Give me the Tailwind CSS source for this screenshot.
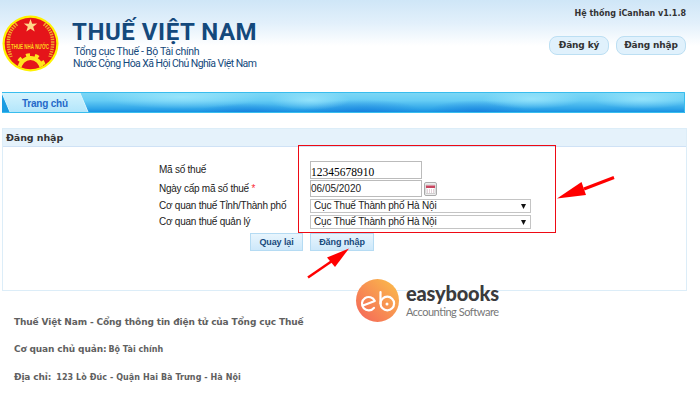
<!DOCTYPE html>
<html lang="vi">
<head>
<meta charset="utf-8">
<title>Thuế Việt Nam</title>
<script src="https://cdn.jsdelivr.net/npm/@tailwindcss/browser@4"></script>
</head>
<body class="relative h-[402px] w-[700px] overflow-hidden bg-white font-['Liberation_Sans',sans-serif] text-[10px] leading-none text-[#222]">
<header class="flex h-[92px] justify-between bg-linear-to-b from-[#cfe6f7] from-0% via-[#e2f0fb] via-25% to-white to-50% pl-[2px] pr-[14px]">
  <div class="flex">
    <svg class="mt-[15px] size-[57px] overflow-visible" viewBox="0 0 57 57">
      <defs><clipPath id="seal"><circle cx="28.500" cy="28.500" r="25.800"/></clipPath></defs>
      <circle cx="28.500" cy="28.500" r="28" fill="#fff200"/>
      <circle cx="28.500" cy="28.500" r="25.800" fill="#e5141a"/>
      <g fill="none" stroke="#f3a52a" stroke-width="3.500" stroke-dasharray="1.500 1">
        <path d="M15 9C6 16 4 27 9 42M42 9C51 16 53 27 48 42"/>
      </g>
      <path d="M28.500 4l1.700 4.800 5-.2-4 3.100 1.500 4.900-4.200-2.900-4.200 2.900 1.500-4.900-4-3.100 5 .2z" fill="#ffd98a"/>
      <g clip-path="url(#seal)" fill="none" stroke="#ffe51e">
        <circle cx="28.500" cy="54" r="11" stroke-width="4"/>
        <circle cx="28.500" cy="54" r="14" stroke-width="3.500" stroke-dasharray="4 5" stroke-dashoffset="2"/>
      </g>
      <text x="9" y="34" font-family="Liberation Sans" font-size="7.500" font-weight="bold" fill="#ffd21a" textLength="38" lengthAdjust="spacingAndGlyphs">THUẾ NHÀ NƯỚC</text>
    </svg>
    <div class="ml-[13px] whitespace-nowrap font-['Roboto',sans-serif] text-[#14497c]">
      <h1 class="mt-[19px] text-[24px] font-bold leading-[26px] tracking-[0.55px]">THUẾ VIỆT NAM</h1>
      <p class="ml-[2px] mt-px text-[10.5px] leading-[12px] tracking-[-0.3px]">Tổng cục Thuế - Bộ Tài chính</p>
      <p class="ml-[1px] text-[10.5px] leading-[12px] tracking-[-0.55px]">Nước Cộng Hòa Xã Hội Chủ Nghĩa Việt Nam</p>
    </div>
  </div>
  <div class="flex flex-col items-end font-['DejaVu_Sans',sans-serif] font-bold text-[#333]">
    <p class="mt-[8px] whitespace-nowrap text-[8px] leading-[12px]">Hệ thống iCanhan v1.1.8</p>
    <div class="mt-[16px] flex gap-[7px] text-[9px] tracking-[-0.15px]">
      <a class="flex h-[19px] w-[60px] items-center justify-center whitespace-nowrap rounded-[8px] border border-[#bcdff3] bg-[#e0f1fc]">Đăng ký</a>
      <a class="flex h-[19px] w-[70px] items-center justify-center whitespace-nowrap rounded-[8px] border border-[#bcdff3] bg-[#e0f1fc]">Đăng nhập</a>
    </div>
  </div>
</header>
<nav class="ml-[2px] h-[21px] w-[683px]">
  <svg class="block" width="683" height="21" viewBox="0 0 683 21">
    <defs>
      <linearGradient id="bar" x2="0" y2="1"><stop stop-color="#7fd8f5"/><stop offset=".4" stop-color="#66cdf5"/><stop offset=".8" stop-color="#2fa5e8"/><stop offset="1" stop-color="#108ae0"/></linearGradient>
      <linearGradient id="tab" x2="0" y2="1"><stop stop-color="#d4f3fd"/><stop offset="1" stop-color="#b3e6fb"/></linearGradient>
      <radialGradient id="dark"><stop stop-color="#1478dc" stop-opacity=".6"/><stop offset="1" stop-color="#1478dc" stop-opacity="0"/></radialGradient>
      <radialGradient id="light"><stop stop-color="#b0f0ff" stop-opacity=".6"/><stop offset="1" stop-color="#b0f0ff" stop-opacity="0"/></radialGradient>
    </defs>
    <rect width="683" height="21" fill="url(#bar)"/>
    <ellipse cx="245" cy="21" rx="50" ry="10" fill="url(#dark)"/>
    <ellipse cx="360" cy="20" rx="60" ry="13" fill="url(#dark)"/>
    <ellipse cx="475" cy="20" rx="50" ry="12" fill="url(#dark)"/>
    <ellipse cx="180" cy="5" rx="80" ry="12" fill="url(#light)"/>
    <ellipse cx="308" cy="8" rx="40" ry="10" fill="url(#light)"/>
    <ellipse cx="530" cy="7" rx="50" ry="10" fill="url(#light)"/>
    <ellipse cx="640" cy="7" rx="50" ry="10" fill="url(#light)"/>
    <path d="M0 .5H682.500V20.500H0" fill="none" stroke="#38bdee"/>
    <path d="M0 1H78L86 20H8z" fill="url(#tab)"/>
    <path d="M0 1V20H8z" fill="#1b9ce2"/>
    <path d="M0 1L8 20M78 1L86 20" stroke="#d9f6ff"/>
    <text x="20" y="15" font-family="Liberation Sans" font-size="10" font-weight="bold" fill="#2569c9" textLength="46">Trang chủ</text>
  </svg>
</nav>
<main class="ml-[2px] mt-[15px] h-[163px] w-[685px] border border-[#dcedf8]">
  <h2 class="h-[18px] border-b border-[#cfe2f6] bg-[#e5f2fb] pl-[3px] font-['DejaVu_Sans',sans-serif] text-[9.5px] font-bold leading-[17px] tracking-[-0.1px] text-[#333]">Đăng nhập</h2>
  <form class="ml-[156px] mt-[13px] grid grid-cols-[151px_auto] items-center tracking-[-0.24px] [grid-template-rows:19px_19px_16px_16px]">
    <label>Mã số thuế</label>
    <div class="h-[18px] w-[112px] border border-[#bbb] pt-[4px] font-['Liberation_Serif',serif] text-[11.5px] leading-[13px] tracking-normal text-black">12345678910</div>
    <label>Ngày cấp mã số thuế <span class="text-red-500">*</span></label>
    <div class="flex items-center gap-[2px]">
      <div class="h-[17px] w-[112px] border border-[#bbb] text-[10px] leading-[16px] tracking-normal">06/05/2020</div>
      <svg width="13" height="14" viewBox="0 0 13 14"><rect x=".5" y=".5" width="12" height="13" rx="1.500" fill="#eee" stroke="#aaa"/><rect x="2" y="3" width="9" height="8.500" fill="#fff" stroke="#aaa" stroke-width=".5"/><path d="M2 3.500h9v2.500H2z" fill="#c84660"/><path d="M3 8h7M3 10h7" stroke="#c9a5b2" stroke-dasharray="1 1"/></svg>
    </div>
    <label>Cơ quan thuế Tỉnh/Thành phố</label>
    <div class="flex h-[14px] w-[221px] items-center justify-between border border-[#c4c4c4] pl-[3px] pr-[4px] tracking-[-0.18px]"><span>Cục Thuế Thành phố Hà Nội</span><svg width="5" height="5"><path d="M0 0h5L2.500 5z" fill="#111"/></svg></div>
    <label>Cơ quan thuế quản lý</label>
    <div class="flex h-[14px] w-[221px] items-center justify-between border border-[#c4c4c4] pl-[3px] pr-[4px] tracking-[-0.18px]"><span>Cục Thuế Thành phố Hà Nội</span><svg width="5" height="5"><path d="M0 0h5L2.500 5z" fill="#111"/></svg></div>
  </form>
  <div class="ml-[247px] mt-[3px] flex gap-[7px] text-[9px] font-bold tracking-[-0.1px] text-[#174a7c]">
    <button class="h-[18px] w-[53px] whitespace-nowrap border border-[#b5dbf3] bg-linear-to-b from-[#e8f5fd] to-[#cde8fa]">Quay lại</button>
    <button class="h-[18px] w-[64px] whitespace-nowrap border border-[#b5dbf3] bg-linear-to-b from-[#e8f5fd] to-[#cde8fa]">Đăng nhập</button>
  </div>
</main>
<footer class="ml-[14px] mt-[25px] flex flex-col gap-[15px] whitespace-nowrap font-['DejaVu_Sans',sans-serif] text-[9px] font-bold leading-[12px] tracking-[-0.13px] text-[#606060]">
  <p>Thuế Việt Nam - Cổng thông tin điện tử của Tổng cục Thuế</p>
  <p>Cơ quan chủ quản:<span class="ml-[2px] text-[8px] tracking-normal">Bộ Tài chính</span></p>
  <p>Địa chỉ: <span class="ml-[2px] text-[8px] tracking-[0.08px]">123 Lò Đúc - Quận Hai Bà Trưng - Hà Nội</span></p>
</footer>
<svg class="absolute left-0 top-0" width="700" height="402" viewBox="0 0 700 402">
  <defs><linearGradient id="eb" x1="1" x2="0" y2="1"><stop stop-color="#fbc04a"/><stop offset="1" stop-color="#f4625a"/></linearGradient></defs>
  <rect x="298.500" y="145.500" width="257" height="87" fill="none" stroke="#ee0a14"/>
  <g fill="#f00" stroke="#f00">
    <path d="M614 177.500L584 189" stroke-width="3"/><path d="M557 198.500L581.500 182L586 195z" stroke="none"/>
    <path d="M308 277.500L332 261" stroke-width="2.500"/><path d="M349 248.500L327 257.500L335 267z" stroke="none"/>
  </g>
  <circle cx="377.500" cy="300.500" r="21.500" fill="url(#eb)"/>
  <g fill="none" stroke="#fff" stroke-width="2.200" stroke-linecap="round" stroke-linejoin="round">
    <path d="M363 305.500L374.800 301A6.700 6.700 0 1 0 374 307.800"/>
    <path d="M380.500 292V303.500"/><circle cx="387.300" cy="303.500" r="6.800"/>
  </g>
  <circle cx="387" cy="304" r="1.500" fill="#fff"/>
  <text x="406" y="301" font-family="Lato" font-size="20" font-weight="900" fill="#3b3b3d" textLength="93">easybooks</text>
  <text x="406" y="315.500" font-family="Lato" font-size="11" fill="#777" textLength="93">Accounting Software</text>
</svg>
</body>
</html>
